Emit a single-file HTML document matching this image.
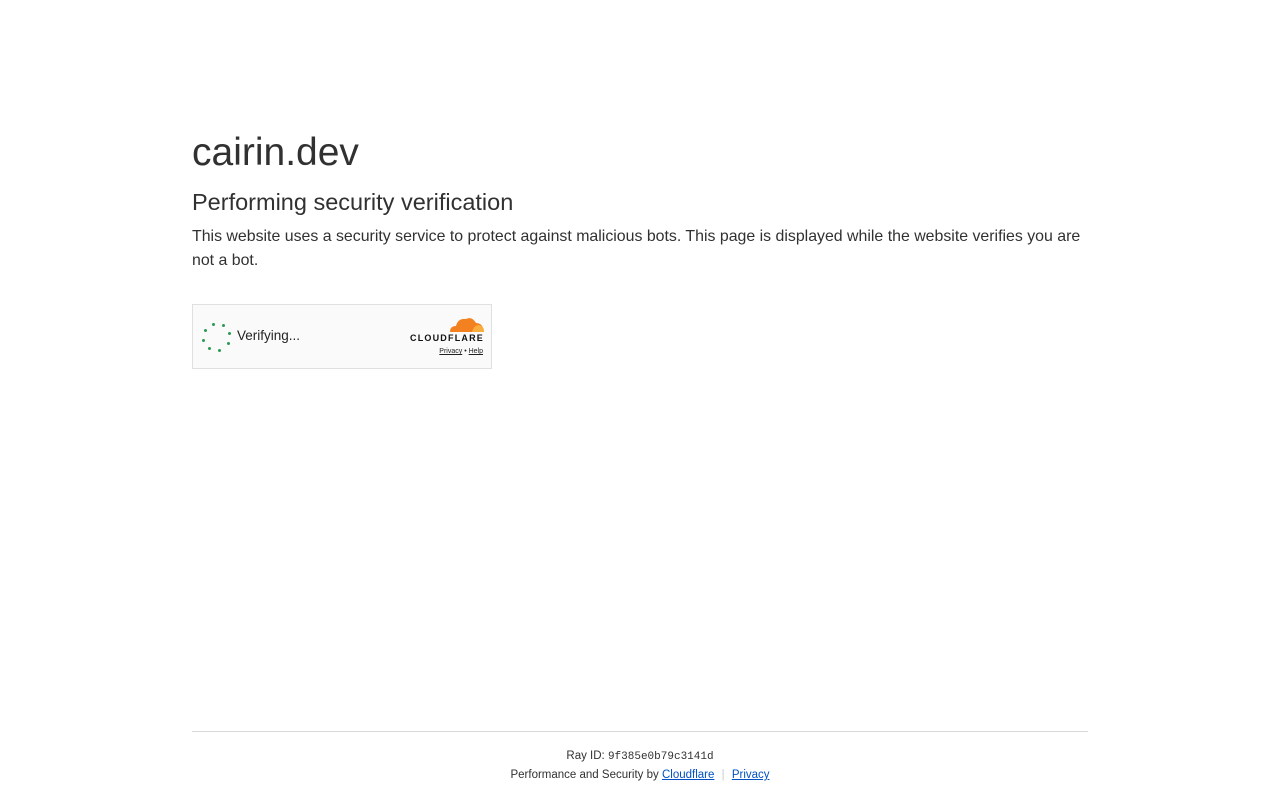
<!DOCTYPE html>
<html><head><meta charset="utf-8"><style>
body{margin:0;background:#fff;font-family:"Liberation Sans",sans-serif;color:#313131;}
h1{position:absolute;left:192px;top:127px;margin:0;font-size:39px;font-weight:400;line-height:52px;}
h2{position:absolute;left:192px;top:186px;margin:0;font-size:23.5px;font-weight:400;line-height:32px;}
p{position:absolute;left:192px;top:225px;width:896px;margin:0;font-size:15.9px;line-height:24px;}
.w{position:absolute;left:192px;top:304px;width:298px;height:63px;border:1px solid #e0e0e0;background:#fafafa;}
.dot{position:absolute;width:3px;height:3px;border-radius:50%;background:#2c9a55;}
.ver{position:absolute;left:44px;top:23px;font-size:13.5px;color:#232323;}
.cf{position:absolute;right:7px;top:28px;font-size:9px;font-weight:700;letter-spacing:1.2px;color:#111;}
.lk{position:absolute;right:8px;top:43px;font-size:7px;color:#222;}
.lk u{text-decoration:underline}
hr{position:absolute;left:192px;top:731px;width:896px;margin:0;border:0;border-top:1px solid #d9d9d9;}
.f{position:absolute;left:0;width:1280px;text-align:center;font-size:12px;color:#313131;}
a{color:#0051c3;text-decoration:underline}
</style></head><body>
<h1>cairin.dev</h1>
<h2>Performing security verification</h2>
<p>This website uses a security service to protect against malicious bots. This page is displayed while the website verifies you are not a bot.</p>
<div class="w">
<div class="dot" style="left:19px;top:18px"></div>
<div class="dot" style="left:29px;top:19px"></div>
<div class="dot" style="left:35px;top:27px"></div>
<div class="dot" style="left:34px;top:37px"></div>
<div class="dot" style="left:25px;top:44px"></div>
<div class="dot" style="left:15px;top:42px"></div>
<div class="dot" style="left:9px;top:34px"></div>
<div class="dot" style="left:11px;top:24px"></div>
<div class="ver">Verifying...</div>
<svg style="position:absolute;left:255px;top:10px" width="37" height="18" viewBox="0 0 37 18"><path d="M2 17 Q2 11 8 11 Q10 3 18 4 Q24 1 28 8 Q35 8 36 17Z" fill="#f48120"/><path d="M24 17 Q26 10 31 10 Q36 11 36 17Z" fill="#faad3f"/></svg>
<div class="cf">CLOUDFLARE</div>
<div class="lk"><u>Privacy</u> • <u>Help</u></div>
</div>
<hr>
<div class="f" style="top:750px;font-size:11.5px">Ray ID: <span style="font-family:'Liberation Mono',monospace;font-size:11px">9f385e0b79c3141d</span></div>
<div class="f" style="top:769px;font-size:11.5px">Performance and Security by <a>Cloudflare</a> <span style="color:#ccc;margin:0 4px">|</span> <a>Privacy</a></div>
</body></html>
